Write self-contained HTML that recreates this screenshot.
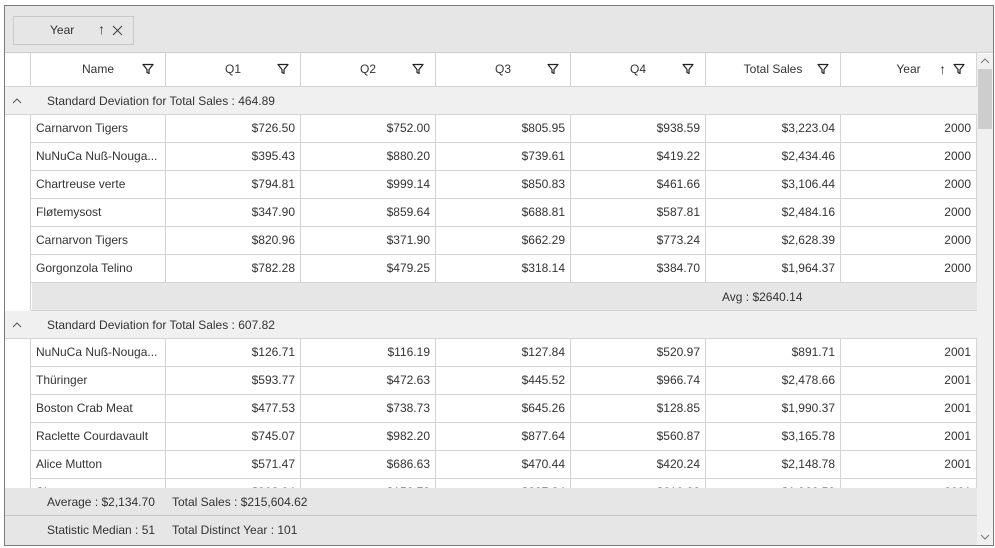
<!DOCTYPE html><html><head><style>
*{box-sizing:border-box;margin:0;padding:0}
body{width:995px;height:548px;background:#fff;font-family:"Liberation Sans",sans-serif;font-size:12px;color:#333;position:relative;overflow:hidden}
.abs{position:absolute}
#frame{left:4px;top:5px;width:990px;height:541px;border:1px solid #7a7a7a}
#drop{left:5px;top:6px;width:988px;height:47px;background:#e6e6e6;border-bottom:1px solid #ccc}
#chip{left:13px;top:16px;width:121px;height:29px;border:1px solid #c8c8c8;background:#e6e6e6}
.r{position:absolute;left:5px;width:972px;height:28px;border-bottom:1px solid #d4d4d4}
.c{position:absolute;top:0;height:27px;line-height:27px;border-right:1px solid #d4d4d4;padding:0 5px;white-space:nowrap;overflow:hidden}
.num{text-align:right}
.hd .c{height:33px;line-height:33px;text-align:center}
.fil{position:absolute;top:10px;width:12px;height:12px}
.ind{position:absolute;left:5px;width:26px;background:#fff;border-right:1px solid #d4d4d4}
</style></head><body>
<div class="abs" id="frame"></div>
<div class="abs" id="drop"></div>
<div class="abs" id="chip"><span class="abs" style="left:36px;top:6px">Year</span><span class="abs" style="left:84px;top:4px;font-size:14px">↑</span><svg class="abs" style="left:98px;top:8px" width="11" height="11"><path d="M1 1L10 10M10 1L1 10" stroke="#444" stroke-width="1.1"/></svg></div>
<div id="g"></div>
<div class="abs" style="left:977px;top:54px;width:16px;height:491px;background:#f0f0f0"></div>
<div class="abs" style="left:978px;top:69px;width:14px;height:60px;background:#cdcdcd"></div>
<svg class="abs" style="left:980px;top:57px" width="10" height="8"><path d="M1 6L5 2L9 6" stroke="#777" fill="none"/></svg>
<svg class="abs" style="left:980px;top:533px" width="10" height="8"><path d="M1 2L5 6L9 2" stroke="#777" fill="none"/></svg>
<script>
const cols=[[5,26],[31,135],[166,135],[301,135],[436,135],[571,135],[706,135],[841,136]];
const names=["Name","Q1","Q2","Q3","Q4","Total Sales","Year"];
let h='';
const fsvg=x=>`<svg class="fil" style="left:${x}px" viewBox="0 0 12 12"><path d="M1 1.5H11L7 6.5V10.5L5 9.5V6.5Z" fill="none" stroke="#222" stroke-width="1.2" stroke-linejoin="round"/></svg>`;
h+=`<div class="r hd" style="top:53px;height:34px;background:#fff">`;
cols.forEach((c,i)=>{h+=`<div class="c" style="left:${c[0]-5}px;width:${c[1]}px">${i?names[i-1]:''}</div>`;if(i)h+=fsvg(c[0]-5+c[1]-24)});
h+=`<span class="abs" style="left:${841-5+136-38}px;top:8px;font-size:14px">↑</span></div>`;
function row(top,d){let s=`<div class="r" style="top:${top}px">`;
d.forEach((v,i)=>{const c=cols[i+1];s+=`<div class="c ${i?'num':''}" style="left:${c[0]-5}px;width:${c[1]}px">${v}</div>`});return s+'</div>';}
function cap(top,t){return `<div class="r" style="top:${top}px;background:#f0f0f0"><svg class="abs" style="left:7px;top:11px" width="10" height="6"><path d="M1 5L5 1L9 5" stroke="#555" fill="none"/></svg><span class="abs" style="left:42px;top:7px">${t}</span></div>`}
h+=cap(87,'Standard Deviation for Total Sales : 464.89');
const g1=[["Carnarvon Tigers","$726.50","$752.00","$805.95","$938.59","$3,223.04","2000"],["NuNuCa  Nuß-Nouga...","$395.43","$880.20","$739.61","$419.22","$2,434.46","2000"],["Chartreuse verte","$794.81","$999.14","$850.83","$461.66","$3,106.44","2000"],["Fløtemysost","$347.90","$859.64","$688.81","$587.81","$2,484.16","2000"],["Carnarvon Tigers","$820.96","$371.90","$662.29","$773.24","$2,628.39","2000"],["Gorgonzola Telino","$782.28","$479.25","$318.14","$384.70","$1,964.37","2000"]];
g1.forEach((d,i)=>h+=row(115+28*i,d));
h+=`<div class="r" style="top:283px"><div class="abs" style="left:27px;top:0;width:945px;height:27px;background:#e6e6e6"></div><span class="abs" style="left:717px;top:7px">Avg : $2640.14</span></div>`;
h+=cap(311,'Standard Deviation for Total Sales : 607.82');
const g2=[["NuNuCa  Nuß-Nouga...","$126.71","$116.19","$127.84","$520.97","$891.71","2001"],["Thüringer","$593.77","$472.63","$445.52","$966.74","$2,478.66","2001"],["Boston Crab Meat","$477.53","$738.73","$645.26","$128.85","$1,990.37","2001"],["Raclette Courdavault","$745.07","$982.20","$877.64","$560.87","$3,165.78","2001"],["Alice Mutton","$571.47","$686.63","$470.44","$420.24","$2,148.78","2001"],["Sir","$902.04","$156.79","$297.24","$610.02","$1,966.50","2001"]];
g2.forEach((d,i)=>h+=row(339+28*i,d));
h+=`<div class="ind" style="top:115px;height:196px"></div><div class="ind" style="top:339px;height:149px"></div>`;
h+=`<div class="abs" style="left:5px;top:488px;width:972px;height:57px;background:#e6e6e6"><div class="abs" style="left:0;top:27px;width:972px;border-top:1px solid #c8c8c8"></div><span class="abs" style="left:42px;top:7px">Average :  $2,134.70</span><span class="abs" style="left:167px;top:7px">Total Sales : $215,604.62</span><span class="abs" style="left:42px;top:35px">Statistic Median : 51</span><span class="abs" style="left:167px;top:35px">Total Distinct Year : 101</span></div>`;
document.getElementById('g').innerHTML=h;
</script>
</body></html>
